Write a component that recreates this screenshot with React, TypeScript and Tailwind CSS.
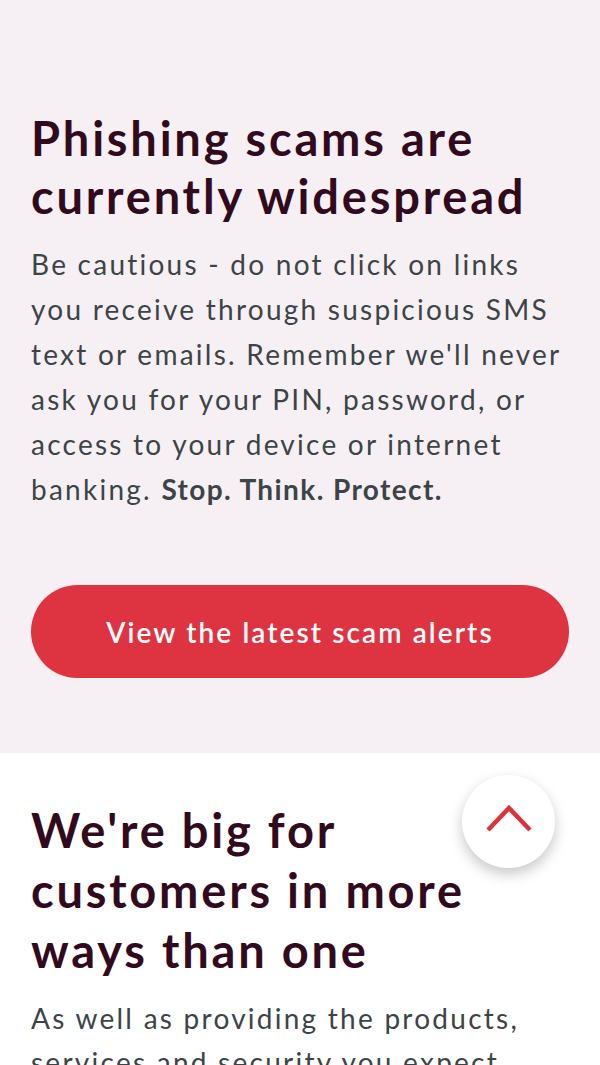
import { useState } from 'react';

const sans = { fontFamily: 'Lato, "Noto Sans", "Liberation Sans", sans-serif' };

const ScrollTopButton = () => {
  return (
    <button
      type="button"
      aria-label="Back to top"
      className="absolute right-[45px] top-[775px] flex h-[93px] w-[93px] items-center justify-center rounded-full bg-white shadow-[0_6px_14px_rgba(0,0,0,0.22)]"
    >
      <svg width="46" height="30" viewBox="0 0 46 30" fill="none" className="-mt-[7px]">
        <path d="M2 27 L23 5 L44 27" stroke="#d9333f" strokeWidth="4.5" />
      </svg>
    </button>
  );
};

export default function App() {
  const [hovered, setHovered] = useState(false);

  return (
    <div className="relative min-h-[1065px] w-full overflow-hidden bg-white" style={sans}>
      {/* scam warning */}
      <section className="bg-[#f6f0f4] px-[31px] pb-[75px] pt-[109px]">
        <h2 className="text-[47px] font-bold leading-[58px] tracking-[2.8px] text-[#310a1d]">
          Phishing scams are currently widespread
        </h2>
        <p className="mt-[17px] text-[28px] leading-[45px] tracking-[2.25px] text-[#3c4447]">
          Be cautious - do not click on links you receive through suspicious SMS text or emails. Remember we'll never
          ask you for your PIN, password, or access to your device or internet banking.{' '}
          <span className="font-bold tracking-[1.4px]">Stop. Think. Protect.</span>
        </p>
        <a
          href="#"
          onMouseEnter={() => setHovered(true)}
          onMouseLeave={() => setHovered(false)}
          className={
            hovered
              ? 'mt-[73px] flex h-[93px] items-center justify-center rounded-full bg-[#c42a36] text-[28px] font-semibold tracking-[2.1px] text-white'
              : 'mt-[73px] flex h-[93px] items-center justify-center rounded-full bg-[#de3341] text-[28px] font-semibold tracking-[2.1px] text-white'
          }
        >
          View the latest scam alerts
        </a>
      </section>

      {/* big for customers */}
      <section className="bg-white px-[31px] pt-[47px]">
        <h2 className="pr-[100px] text-[47px] font-bold leading-[60px] tracking-[2.8px] text-[#310a1d]">
          We're big for customers in more ways than one
        </h2>
        <p className="mt-[16px] text-[28px] leading-[44px] tracking-[2.25px] text-[#3c4447]">
          As well as providing the products, services and security you expect from a bank, we're committed to
          supporting our customers and communities.
        </p>
      </section>

      <ScrollTopButton />
    </div>
  );
}
